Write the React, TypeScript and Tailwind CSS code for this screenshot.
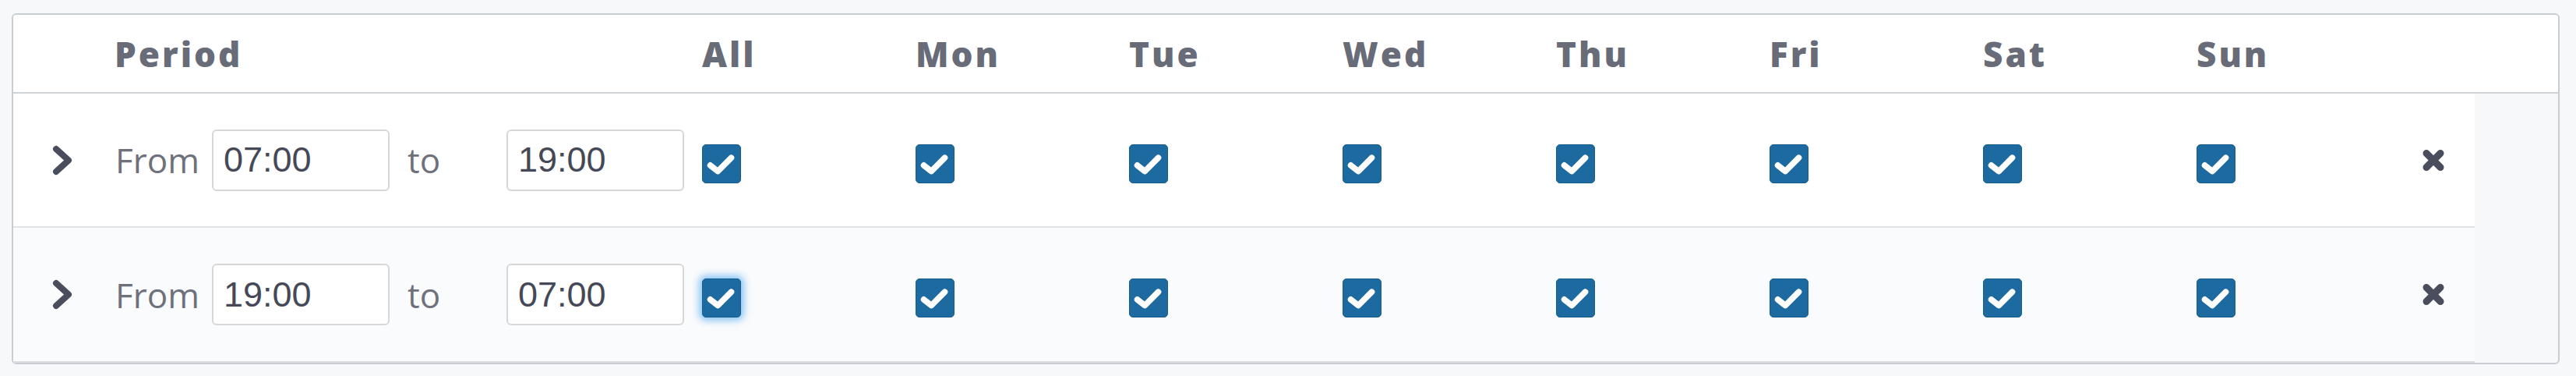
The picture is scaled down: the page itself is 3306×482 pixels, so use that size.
import { useState } from "react";

const days = ["All", "Mon", "Tue", "Wed", "Thu", "Fri", "Sat", "Sun"];

const initialRows = [
  { id: 1, from: "07:00", to: "19:00", bg: "bg-white", border: "border-[#e2e4e6]" },
  { id: 2, from: "19:00", to: "07:00", bg: "bg-[#fafbfc]", border: "border-[#dcdde0]" },
];

export default function App() {
  const [rows, setRows] = useState(initialRows);

  return (
    <div className="min-h-[482px] bg-[#f7f8f9] pl-[15px] pt-[17px] font-['Open_Sans',sans-serif]">
      <div className="h-[450px] w-[3270px] overflow-hidden rounded-[6px] border-2 border-[#c9ccd3] bg-[#f7f8fa]">
        <div className="grid h-[101px] grid-cols-[130px_754px_repeat(8,274px)_1fr] items-center border-b-2 border-[#cfd3d6] bg-white text-[44px] font-extrabold tracking-[3px] text-[#686b78]">
          <div />
          <div>Period</div>
          {days.map((day) => (
            <div key={day}>{day}</div>
          ))}
          <div />
        </div>

        {rows.map((row, i) => (
          <PeriodRow
            key={row.id}
            from={row.from}
            to={row.to}
            bg={row.bg}
            border={row.border}
            focused={i === 1}
            height={i === 0 ? "h-[172px]" : "h-[173px]"}
            onRemove={() => setRows((r) => r.filter((x) => x.id !== row.id))}
          />
        ))}
      </div>
    </div>
  );
}

function PeriodRow({
  from,
  to,
  bg,
  border,
  focused,
  height,
  onRemove,
}: {
  from: string;
  to: string;
  bg: string;
  border: string;
  focused: boolean;
  height: string;
  onRemove: () => void;
}) {
  return (
    <div
      className={`grid w-[3159px] grid-cols-[130px_754px_repeat(8,274px)_1fr] items-center border-b-2 ${height} ${bg} ${border}`}
    >
      <div className="pl-[50px]">
        <ChevronIcon />
      </div>
      <div className="flex items-center pl-[1px] text-[44px] text-[#6e717c]">
        <span className="w-[124px]">From</span>
        <TimeInput value={from} />
        <span className="ml-[23px] w-[127px]">to</span>
        <TimeInput value={to} />
      </div>
      {days.map((day, j) => (
        <div key={day} className="mt-[9px]">
          <CheckBox focused={focused && j === 0} />
        </div>
      ))}
      <div className="pl-[15px]">
        <button type="button" aria-label="Remove period" onClick={onRemove} className="block">
          <CloseIcon />
        </button>
      </div>
    </div>
  );
}

function TimeInput({ value }: { value: string }) {
  return (
    <input
      defaultValue={value}
      className="h-[79px] w-[228px] rounded-[6px] border-2 border-[#d7d7d7] bg-white pl-[13px] font-['Liberation_Sans',Arial,sans-serif] text-[45px] text-[#454856] outline-none"
    />
  );
}

function CheckBox({ focused }: { focused: boolean }) {
  const [checked, setChecked] = useState(true);
  return (
    <span
      role="checkbox"
      aria-checked={checked}
      onClick={() => setChecked((c) => !c)}
      className={`flex h-[50px] w-[50px] items-center justify-center rounded-[5px] border border-[#175d8d] ${
        checked ? "bg-[#1c6aa0]" : "bg-white"
      } ${focused ? "shadow-[0_0_10px_4px_rgba(64,160,240,0.6)]" : ""}`}
    >
      {checked ? (
        <svg aria-hidden="true" width="50" height="50" viewBox="0 0 50 50" fill="none">
          <path
            d="M10 27L20 35L38 17"
            stroke="white"
            strokeWidth="8"
            strokeLinecap="round"
            strokeLinejoin="round"
          />
        </svg>
      ) : null}
    </span>
  );
}

function ChevronIcon() {
  return (
    <svg aria-hidden="true" width="26" height="39" viewBox="0 0 26 39" fill="none">
      <path
        d="M5 5L21 19.5L5 34"
        stroke="#4a4d5b"
        strokeWidth="8"
        strokeLinecap="round"
        strokeLinejoin="round"
      />
    </svg>
  );
}

function CloseIcon() {
  return (
    <svg aria-hidden="true" width="30" height="29" viewBox="0 0 30 29" fill="none">
      <path
        d="M6 5.5L24 23.5M24 5.5L6 23.5"
        stroke="#4a4d5b"
        strokeWidth="9"
        strokeLinecap="round"
      />
    </svg>
  );
}
